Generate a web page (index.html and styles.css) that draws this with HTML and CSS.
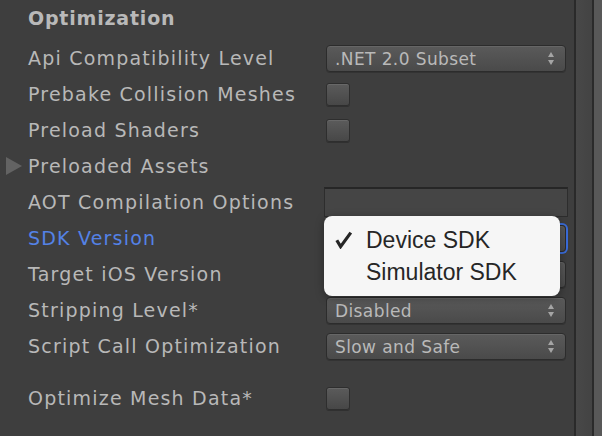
FILE: index.html
```html
<!DOCTYPE html>
<html>
<head>
<meta charset="utf-8">
<link rel="stylesheet" href="styles.css">
</head>
<body>
<div class="window">
  <div class="inspector">
    <div class="header">Optimization</div>
    <div class="row">
      <span class="label">Api Compatibility Level</span>
      <div class="popup"><span class="value">.NET 2.0 Subset</span><span class="arrows"><i class="up"></i><i class="down"></i></span></div>
    </div>
    <div class="row">
      <span class="label">Prebake Collision Meshes</span>
      <div class="check-box"></div>
    </div>
    <div class="row">
      <span class="label">Preload Shaders</span>
      <div class="check-box"></div>
    </div>
    <div class="row">
      <span class="label foldout"><i class="tri"></i>Preloaded Assets</span>
    </div>
    <div class="row">
      <span class="label">AOT Compilation Options</span>
      <div class="text-field"></div>
    </div>
    <div class="row">
      <span class="label active">SDK Version</span>
      <div class="popup focused"><span class="value"></span><span class="arrows"><i class="up"></i><i class="down"></i></span></div>
    </div>
    <div class="row">
      <span class="label">Target iOS Version</span>
      <div class="popup"><span class="value"></span><span class="arrows"><i class="up"></i><i class="down"></i></span></div>
    </div>
    <div class="row">
      <span class="label">Stripping Level*</span>
      <div class="popup"><span class="value">Disabled</span><span class="arrows"><i class="up"></i><i class="down"></i></span></div>
    </div>
    <div class="row">
      <span class="label">Script Call Optimization</span>
      <div class="popup"><span class="value">Slow and Safe</span><span class="arrows"><i class="up"></i><i class="down"></i></span></div>
    </div>
    <div class="spacer"></div>
    <div class="row">
      <span class="label">Optimize Mesh Data*</span>
      <div class="check-box"></div>
    </div>
  </div>
  <div class="scrollbar">
    <div class="sb-dark"></div>
    <div class="sb-track"></div>
    <div class="sb-dark"></div>
    <div class="sb-light"></div>
  </div>
  <div class="menu">
    <div class="menu-item"><span class="mark"><svg width="18" height="18" viewBox="0 0 18 18"><path d="M1.8 9.2 L5.6 15.6 L15.8 1.6" fill="none" stroke="#262626" stroke-width="3.2" stroke-linejoin="miter" stroke-linecap="butt"/></svg></span>Device SDK</div>
    <div class="menu-item"><span class="mark"></span>Simulator SDK</div>
  </div>
</div>
</body>
</html>
```
FILE: styles.css
```css
html, body {
  margin: 0;
  padding: 0;
  background: #3e3e3e;
}
.window {
  position: relative;
  width: 602px;
  height: 436px;
  display: flex;
  overflow: hidden;
  background: #3e3e3e;
  font-family: "DejaVu Sans", sans-serif;
}
.inspector {
  width: 574px;
  display: flex;
  flex-direction: column;
}
.header {
  height: 40px;
  box-sizing: border-box;
  padding: 7px 0 0 28px;
  font-size: 19px;
  font-weight: bold;
  letter-spacing: 0.8px;
  color: #b9b9b9;
  line-height: 22px;
}
.row {
  height: 36px;
  display: grid;
  grid-template-columns: 326px 240px;
  align-items: center;
}
.label {
  padding: 0 0 0 28px;
  font-size: 19px;
  letter-spacing: 1.2px;
  color: #b8b8b8;
  white-space: nowrap;
}
.label.active {
  color: #5482e6;
}
.label.foldout {
  padding-left: 6px;
  display: flex;
  align-items: center;
  gap: 6px;
}
.tri {
  width: 0;
  height: 0;
  border-style: solid;
  border-width: 9px 0 9px 16px;
  border-color: transparent transparent transparent #636363;
}
.popup {
  height: 27px;
  box-sizing: border-box;
  border: 1px solid #2c2c2c;
  border-radius: 4px;
  background: linear-gradient(#5a5a5a, #4a4a4a);
  box-shadow: inset 0 1px 0 #666, 0 1px 0 #333;
  display: flex;
  align-items: center;
  justify-content: space-between;
  padding: 1px 11px 0 8px;
}
.popup.focused {
  box-shadow: inset 0 1px 0 #666, 0 0 0 2px #3a6cd9;
}
.value {
  font-size: 17px;
  color: #b9b9b9;
  letter-spacing: 0.4px;
}
.arrows {
  display: flex;
  flex-direction: column;
  gap: 3px;
}
.arrows i {
  display: block;
  width: 0;
  height: 0;
  border-style: solid;
}
.arrows .up {
  border-width: 0 3px 5px 3px;
  border-color: transparent transparent #a5a5a5 transparent;
}
.arrows .down {
  border-width: 5px 3px 0 3px;
  border-color: #a5a5a5 transparent transparent transparent;
}
.check-box {
  width: 24px;
  height: 23px;
  box-sizing: border-box;
  border: 1px solid #2e2e2e;
  border-radius: 3px;
  background: linear-gradient(#5b5b5b, #474747);
  box-shadow: inset 0 1px 0 #686868, 0 1px 0 #303030;
}
.text-field {
  margin-left: -2px;
  width: 244px;
  height: 30px;
  box-sizing: border-box;
  border: 1px solid #2d2d2d;
  border-top: 2px solid #262626;
  background: #454545;
}
.spacer {
  height: 16px;
}
.scrollbar {
  width: 28px;
  display: flex;
}
.sb-dark {
  width: 2px;
  background: #2a2a2a;
}
.sb-track {
  width: 16px;
  background: linear-gradient(to right, #484848, #434343);
}
.sb-light {
  width: 8px;
  background: #585858;
}
.menu {
  position: absolute;
  left: 324px;
  top: 216px;
  width: 236px;
  height: 80px;
  box-sizing: border-box;
  padding-top: 8px;
  background: #f6f6f6;
  border-radius: 8px;
  box-shadow: 0 2px 8px rgba(0, 0, 0, 0.35);
  font-family: "Liberation Sans", Arial, sans-serif;
  font-size: 23px;
  color: #262626;
}
.menu-item {
  height: 32px;
  line-height: 32px;
  display: flex;
  white-space: nowrap;
}
.mark {
  width: 42px;
  flex: none;
  display: flex;
  align-items: flex-start;
}
.mark svg {
  margin: 7px 0 0 11px;
}
```
